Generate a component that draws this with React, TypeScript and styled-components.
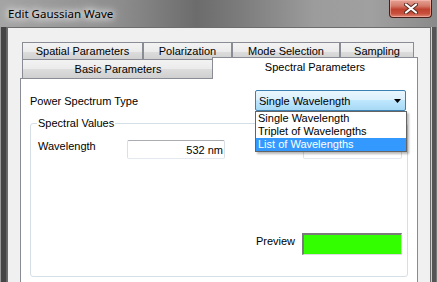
import React from 'react'
import styled, { createGlobalStyle } from 'styled-components'

const GlobalStyle = createGlobalStyle`
html, body {
  margin: 0;
  padding: 0;
  width: 437px;
  height: 282px;
  overflow: hidden;
}
body {
  font-family: "Liberation Sans", Arial, sans-serif;
  font-size: 11px;
  color: #000;
}
`

const backTabs = [
  { label: 'Spatial Parameters', width: 121 },
  { label: 'Polarization', width: 89 },
  { label: 'Mode Selection', width: 108 },
  { label: 'Sampling', width: 74 },
]

const options = ['Single Wavelength', 'Triplet of Wavelengths', 'List of Wavelengths']

const App = () => {
  return (
    <>
      <GlobalStyle />
      <Window>
        <TitleBar>
          <Title>Edit Gaussian Wave</Title>
          <CloseButton>
            <svg width="14" height="11" viewBox="0 0 14 11">
              <path d="M2 1.5 L12 9.5 M12 1.5 L2 9.5" stroke="#5a2a22" strokeWidth="4" strokeLinecap="round" />
              <path d="M2 1.5 L12 9.5 M12 1.5 L2 9.5" stroke="#fff" strokeWidth="2.2" strokeLinecap="round" />
            </svg>
          </CloseButton>
        </TitleBar>
        <Body>
          <LeftFrame />
          <Client>
            <TabRow>
              {backTabs.map((t) => (
                <Tab key={t.label} $width={t.width}>{t.label}</Tab>
              ))}
            </TabRow>
            <FrontRow>
              <Tab $width={192} $front>Basic Parameters</Tab>
              <ActiveTab $width={206}>Spectral Parameters</ActiveTab>
            </FrontRow>
            <Page>
              <TypeRow>
                <span>Power Spectrum Type</span>
                <ComboWrap>
                  <Combo>
                    <span>Single Wavelength</span>
                    <svg width="7" height="4" viewBox="0 0 7 4">
                      <path d="M0 0 H7 L3.5 4 Z" fill="#000" />
                    </svg>
                  </Combo>
                  <DropList>
                    {options.map((o, i) => (
                      <Option key={o} $selected={i === 2}>{o}</Option>
                    ))}
                  </DropList>
                </ComboWrap>
              </TypeRow>
              <Group>
                <Legend>Spectral Values</Legend>
                <GroupContent>
                  <FieldRow>
                    <FieldLabel>Wavelength</FieldLabel>
                    <TextBox $width={98}>532 nm</TextBox>
                    <SideLabel>Spacing</SideLabel>
                    <TextBox $width={99} />
                  </FieldRow>
                  <FieldRow>
                    <SideLabel $top={2}>Preview</SideLabel>
                    <Swatch $color="#33ff00" />
                  </FieldRow>
                </GroupContent>
              </Group>
            </Page>
          </Client>
          <RightFrame />
        </Body>
      </Window>
    </>
  )
}

export default App

const Window = styled.div`
display: flex;
flex-direction: column;
width: 437px;
height: 282px;
overflow: hidden;
background: linear-gradient(to right, #a4a4a4 0%, #8c8c8c 28%, #6c6c6c 45%, #7c7c7c 55%, #9c9c9c 72%, #a0a0a0 85%, #8a8a8a 100%);
`

const TitleBar = styled.div`
height: 27px;
flex: none;
display: flex;
justify-content: space-between;
align-items: flex-start;
padding-left: 8px;
`

const Title = styled.div`
font-family: "Segoe UI", "Noto Sans", sans-serif;
font-size: 11.5px;
line-height: 16px;
margin-top: 6px;
color: #000;
text-shadow: 0 0 6px #fff, 0 0 10px #fff, 0 0 14px rgba(255,255,255,0.9);
`

const CloseButton = styled.div`
width: 41px;
height: 17px;
margin-right: 5px;
display: flex;
align-items: center;
justify-content: center;
border: 1px solid #4a1e18;
border-top: none;
border-radius: 0 0 4px 4px;
background: linear-gradient(#e6a396 0%, #d47a6a 35%, #c0412f 55%, #c9503d 80%, #de8a78 100%);
box-shadow: inset 0 0 0 1px rgba(255,200,190,0.5);
`

const Body = styled.div`
flex: 1;
display: flex;
min-height: 0;
`

const LeftFrame = styled.div`
width: 7px;
flex: none;
background: linear-gradient(to right, #9a9a9a 0 1px, #454545 1px 6px, #666 6px 7px);
`

const RightFrame = styled.div`
width: 6px;
flex: none;
background: linear-gradient(to right, #cfcfcf 0 1px, #555 1px 5px, #777 5px 6px);
`

const Client = styled.div`
flex: 1;
display: flex;
flex-direction: column;
background: #f0f0f0;
border: 1px solid #6d6d6d;
border-bottom: none;
padding: 14px 12px 0 12px;
`

const TabRow = styled.div`
display: flex;
height: 17px;
padding-left: 2px;
`

const FrontRow = styled.div`
display: flex;
align-items: flex-end;
height: 20px;
padding-left: 2px;
margin-bottom: -1px;
position: relative;
z-index: 1;
`

const Tab = styled.div<{ $width: number; $front?: boolean }>`
box-sizing: border-box;
flex: none;
width: ${(p) => p.$width}px;
height: ${(p) => (p.$front ? 20 : 18)}px;
display: flex;
align-items: center;
justify-content: center;
border: 1px solid #898c95;
border-bottom: ${(p) => (p.$front ? '1px solid #898c95' : 'none')};
padding-bottom: ${(p) => (p.$front ? 0 : 1)}px;
background: linear-gradient(#f3f3f3 0%, #ebebeb 50%, #dddddd 50%, #cfcfcf 100%);
white-space: nowrap;
`

const ActiveTab = styled.div<{ $width: number }>`
box-sizing: border-box;
flex: none;
width: ${(p) => p.$width}px;
height: 22px;
margin-left: -2px;
display: flex;
justify-content: center;
padding-top: 3px;
border: 1px solid #898c95;
border-bottom: none;
background: #fff;
white-space: nowrap;
`

const Page = styled.div`
flex: 1;
position: relative;
background: #fff;
border: 1px solid #898c95;
border-bottom: none;
padding: 11px 0 0 0;
`

const TypeRow = styled.div`
display: flex;
align-items: center;
justify-content: space-between;
height: 21px;
padding: 0 11px 0 9px;
`

const ComboWrap = styled.div`
position: relative;
z-index: 2;
`

const Combo = styled.div`
box-sizing: border-box;
width: 151px;
height: 21px;
display: flex;
align-items: center;
justify-content: space-between;
padding: 0 4px 0 3px;
border: 1px solid #3c7fb1;
border-radius: 2px;
background: linear-gradient(#eaf6fd 0%, #d9f0fc 50%, #bee6fd 50%, #a7d9f5 100%);
`

const DropList = styled.div`
position: absolute;
top: 100%;
left: 0;
box-sizing: border-box;
width: 152px;
border: 1px solid #646464;
background: #fff;
box-shadow: 2px 2px 2px rgba(0, 0, 0, 0.28);
`

const Option = styled.div<{ $selected?: boolean }>`
height: 13px;
line-height: 13px;
padding-left: 2px;
white-space: nowrap;
background: ${(p) => (p.$selected ? '#3399ff' : 'transparent')};
color: ${(p) => (p.$selected ? '#fff' : '#000')};
`

const Group = styled.fieldset`
margin: 6px 9px 0 9px;
padding: 0 5px 0 6px;
border: 1px solid #d5dfe5;
border-radius: 3px;
min-width: 0;
`

const Legend = styled.legend`
padding: 0 1px;
line-height: 13px;
`

const GroupContent = styled.div`
box-sizing: border-box;
height: 146px;
display: flex;
flex-direction: column;
justify-content: space-between;
padding: 10px 0 21px 1px;
`

const FieldRow = styled.div`
display: flex;
align-items: flex-start;
`

const FieldLabel = styled.span`
width: 89px;
flex: none;
`

const SideLabel = styled.span<{ $top?: number }>`
flex: 1;
text-align: right;
margin-right: 7px;
margin-top: ${(p) => p.$top ?? 0}px;
`

const TextBox = styled.div<{ $width: number }>`
box-sizing: border-box;
flex: none;
width: ${(p) => p.$width}px;
height: 19px;
display: flex;
align-items: center;
justify-content: flex-end;
padding-right: 1px;
border: 1px solid #dbdfe6;
border-top-color: #abadb3;
border-bottom-color: #e3e9ef;
border-radius: 2px;
`

const Swatch = styled.div<{ $color: string }>`
box-sizing: border-box;
flex: none;
width: 100px;
height: 22px;
background: ${(p) => p.$color};
border-style: solid;
border-width: 2px 1px 1px 2px;
border-color: #7a7a7a #dcdcdc #dcdcdc #7a7a7a;
`
